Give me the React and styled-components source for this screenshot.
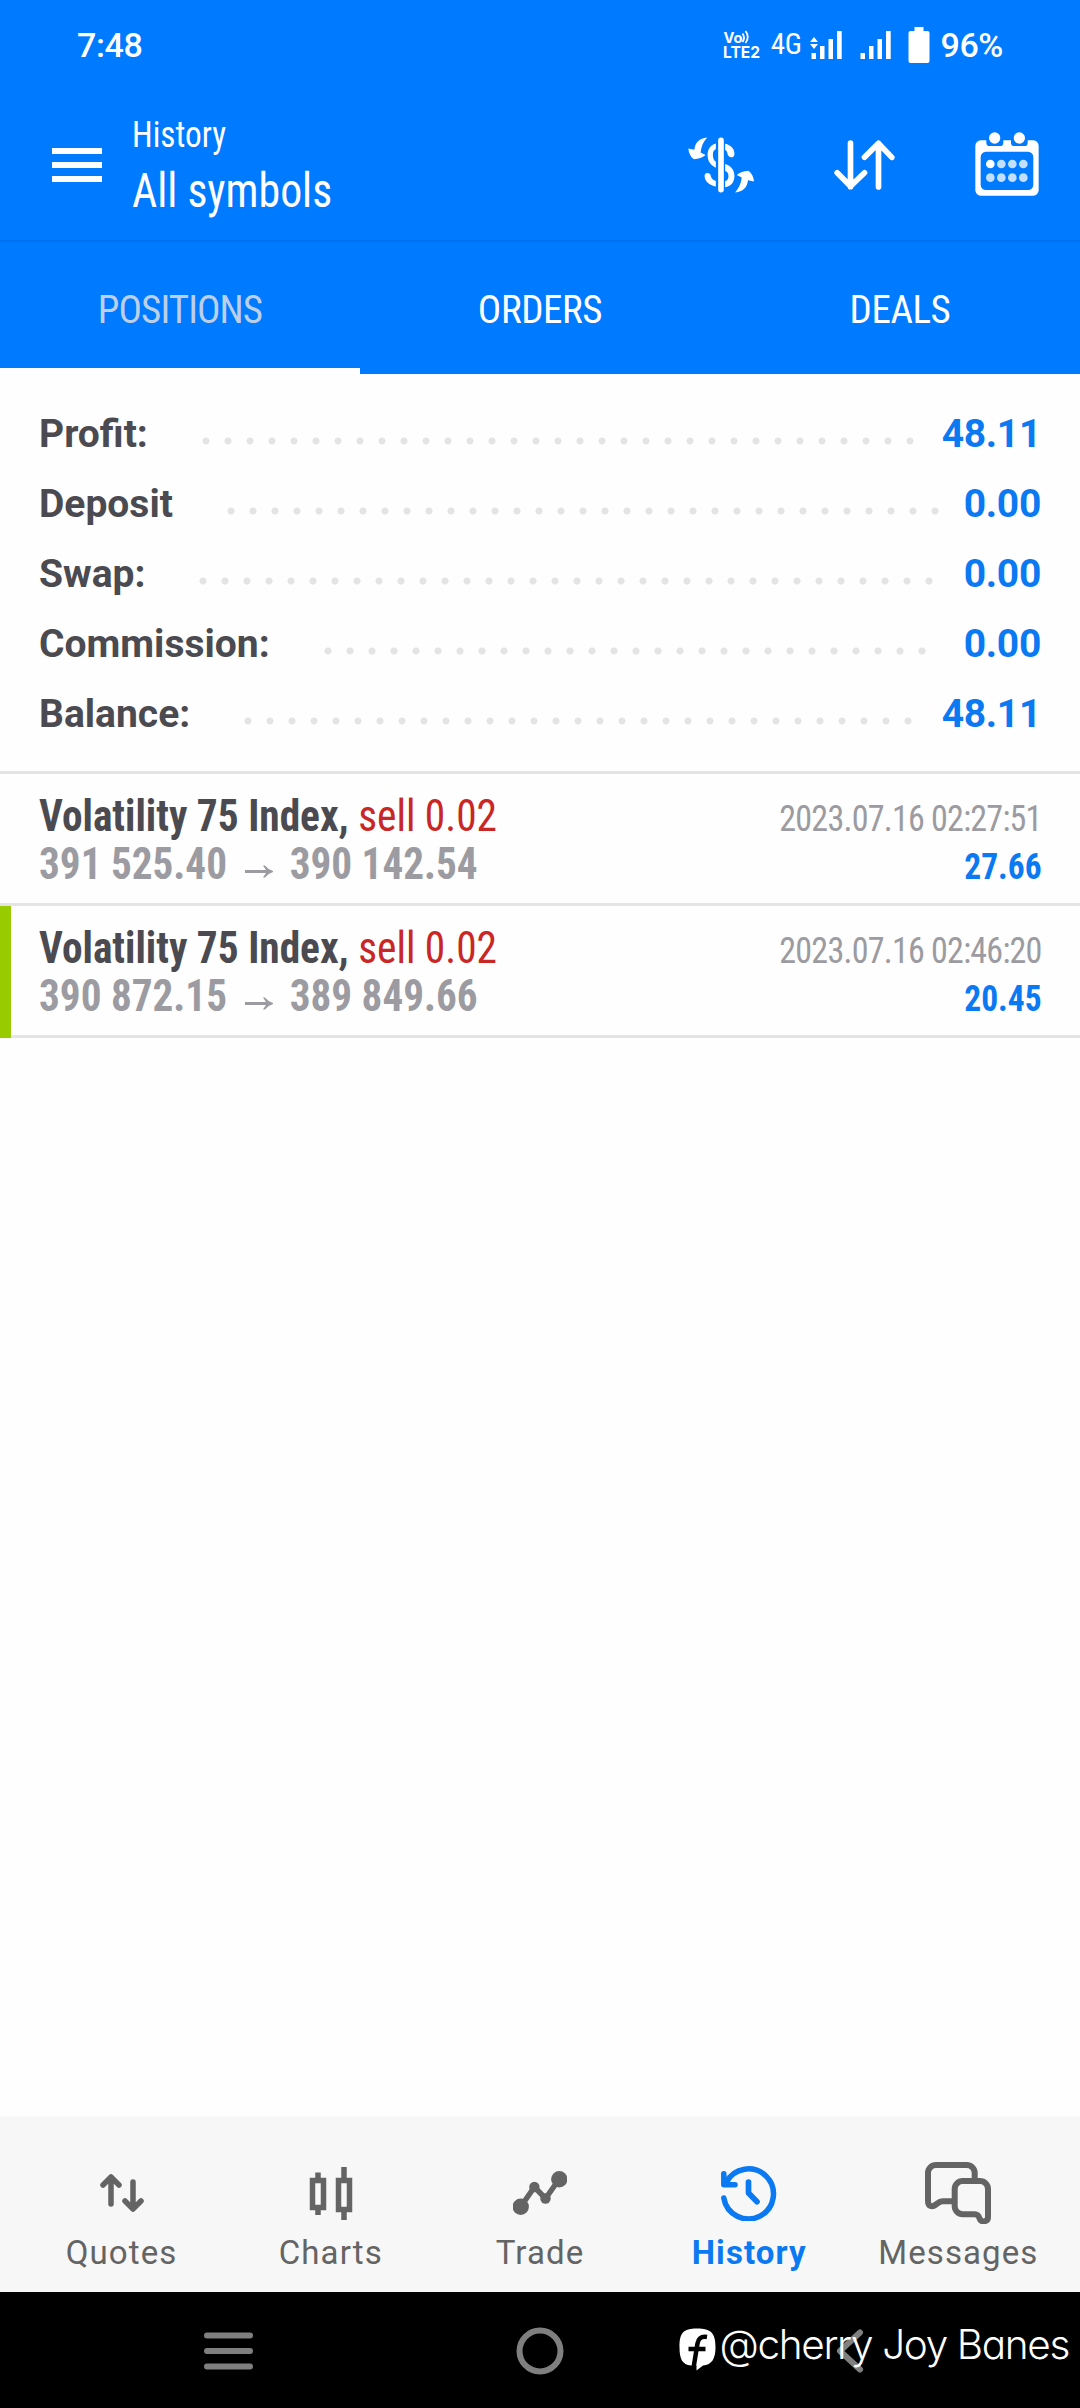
import styled, { createGlobalStyle } from 'styled-components';

const GlobalStyle = createGlobalStyle`
    * {
        box-sizing: border-box;
    }
    body {
        margin: 0;
        background: #fefefe;
        font-family: Roboto, "Liberation Sans", sans-serif;
    }
`

const Screen = styled.div`
    display: flex;
    flex-direction: column;
    width: 1080px;
    height: 2408px;
    overflow: hidden;
    background: #fefefe;
`
const Condensed = styled.span`
    font-family: "Roboto Condensed", Roboto, sans-serif;
    font-stretch: 75%;
    white-space: nowrap;
`

/* ---------- status bar ---------- */

const StatusBar = styled.div`
    display: flex;
    align-items: center;
    justify-content: space-between;
    height: 90px;
    padding: 0 77px;
    background: #007aff;
    color: #fff;
    font-size: 34px;
    font-weight: 500;
    letter-spacing: -0.4px;
`
const StatusIcons = styled.div`
    display: flex;
    align-items: center;
`
const Network = styled(Condensed)`
    font-size: 29px;
    font-weight: 400;
    margin: 0 8px 3px 10px;
`
const Signal = styled.svg`
    margin-right: ${props => props.$gap}px;
`
const Battery = styled.span`
    margin-left: 11px;
`

function VolteIcon() {
    return (
      <svg width="38" height="32" viewBox="0 0 38 32" fill="#fff" fontFamily="Inter, sans-serif" fontWeight="700" letterSpacing="0">
        <text x="0.5" y="13.500" fontSize="14" textLength="19" lengthAdjust="spacingAndGlyphs">Vo</text>
        <path d="M19.500 4.500q3 4 0 8.500M22.500 2q4.500 6 0 12" fill="none" stroke="#fff" strokeWidth="1.800" />
        <text x="0" y="29" fontSize="16" textLength="37" lengthAdjust="spacingAndGlyphs">LTE2</text>
      </svg>
    )
}

function SignalIcon({ arrows, gap }) {
    return (
      <Signal width="32" height="28" viewBox="0 0 32 28" fill="#fff" $gap={gap}>
        {arrows && <path d="M0 11l4-5 4 5zM0 13h8l-4 5z" />}
        <path d="M1.500 22h4.500v6h-4.500zM10 15h4.500v13h-4.500zM18.500 8h4.500v20h-4.500zM27 0h4.700v28h-4.700z" />
      </Signal>
    )
}

/* ---------- app bar ---------- */

const AppBar = styled.header`
    display: flex;
    align-items: center;
    height: 152px;
    padding: 0 41px 0 52px;
    background: #007aff;
    border-bottom: 2px solid #0071ec;
    color: #fff;
`
const Titles = styled.div`
    display: flex;
    flex: 1;
    flex-direction: column;
    padding: 5px 0 0 30px;
`
const Subtitle = styled(Condensed)`
    font-size: 36px;
    line-height: 46px;
    transform: scaleX(0.925);
    transform-origin: left;
`
const Title = styled(Condensed)`
    font-size: 48px;
    line-height: 66px;
    transform: scaleX(0.912);
    transform-origin: left;
`
const Actions = styled.div`
    display: flex;
    align-items: center;
    gap: 80px;
`
const Calendar = styled.svg`
    margin-bottom: 3px;
`

function MenuIcon() {
    return (
      <svg width="50" height="34" viewBox="0 0 50 34" fill="#fff">
        <path d="M0 0h50v6H0zM0 14h50v6H0zM0 28h50v6H0z" />
      </svg>
    )
}

function CurrencyIcon() {
    const arrow = 'M58 1C34 3 22 16 19 38L1 34C2 48 8 60 18 67C32 66 44 62 53 54L38 46C40 28 46 14 58 1Z'
    return (
      <svg width="66" height="56" viewBox="0 0 199 168" fill="#fff">
        <rect x="91" y="1" width="17" height="166" rx="8" />
        <path d="M84 19C66 24 59 38 59 54C59 74 70 86 84 92V74C77 70 75 62 75 54C75 44 78 39 84 36Z" />
        <path d="M112 20C130 24 140 36 140 50C140 58 136 61 131 61C124 61 121 56 119 50C118 44 116 41 112 39Z" />
        <path d="M112 81C130 86 140 100 140 117C140 136 129 149 112 151V133C119 131 122 126 122 117C122 109 119 104 112 101Z" />
        <path d="M84 149C64 145 50 132 50 117C50 111 54 107 60 108C66 109 68 112 69 118C71 126 76 130 84 132Z" />
        <path d={arrow} />
        <path d={arrow} transform="rotate(180 100 84)" />
      </svg>
    )
}

function SortIcon() {
    return (
      <svg width="61" height="50" viewBox="0 0 182 150" fill="none" stroke="#fff" strokeWidth="17" strokeLinecap="round" strokeLinejoin="round">
        <path d="M49 9V140M9 98L49 139L91 98" />
        <path d="M133 141V10M91 52L133 10L173 52" />
      </svg>
    )
}

function CalendarIcon() {
    return (
      <Calendar width="64" height="64" viewBox="0 0 192 192" fill="#fff">
        <rect x="1" y="25" width="190" height="166" rx="16" />
        <path d="M34 20H85V32Q85 42 75 42H44Q34 42 34 32ZM108 20H158V32Q158 42 148 42H118Q108 42 108 32Z" fill="#007aff" />
        <circle cx="59" cy="18" r="17" />
        <circle cx="133" cy="18" r="17" />
        <rect x="17" y="59" width="158" height="115" rx="16" fill="#007aff" />
        {[96, 137].map(y => [46, 79, 112, 145].map(x => (
            <circle key={x + '-' + y} cx={x} cy={y} r="13" opacity={x === 46 && y === 96 ? 1 : 0.76} />
        )))}
      </Calendar>
    )
}

/* ---------- tabs ---------- */

const Tabs = styled.nav`
    display: grid;
    grid-template-columns: repeat(3, 1fr);
    height: 132px;
    background: #007aff;
`
const Tab = styled(Condensed)`
    display: flex;
    align-items: center;
    justify-content: center;
    padding-top: 9px;
    border-bottom: 6px solid ${props => props.$active ? '#fff' : 'transparent'};
    color: ${props => props.$active ? '#bccfe6' : '#fff'};
    font-size: 39px;
    letter-spacing: ${props => props.$active ? -0.9 : -0.4}px;
`

/* ---------- account summary ---------- */

const Summary = styled.section`
    padding: 25px 39px 22px 39px;
    border-bottom: 3px solid #e4e4e4;
`
const SummaryRow = styled.div`
    display: flex;
    align-items: center;
    height: 70px;
    font-size: 39px;
    font-weight: 700;
`
const Label = styled.span`
    color: #4b4a50;
`
const Leader = styled.div`
    flex: 1;
    padding: 13px 13px 0 47px;
`
// keeps only whole dots, whatever the room left by the label
const Dots = styled.div`
    width: round(down, 100%, 22px);
    height: 8px;
    background: radial-gradient(circle, #e4e4e4 3.2px, transparent 3.9px) 0 0 / 22px 8px repeat-x;
`
const Amount = styled.span`
    color: #0a79f2;
    letter-spacing: -0.3px;
`

/* ---------- deals ---------- */

const Deal = styled.article`
    position: relative;
    display: grid;
    grid-template-columns: 1fr auto;
    align-items: baseline;
    height: 132px;
    padding: 18px 38px 0 39px;
    border-bottom: 3px solid #e4e4e4;
    line-height: 48px;
    grid-auto-rows: 48px;

    &::before {
        content: '';
        position: absolute;
        left: 0;
        top: 0;
        bottom: -3px;
        width: ${props => props.$marked ? 11 : 0}px;
        background: #99cc00;
    }
`
const Symbol = styled(Condensed)`
    color: #4b4a50;
    font-size: 44px;
    font-weight: 700;
    transform: scaleX(0.939);
    transform-origin: left;
`
const Side = styled.span`
    color: #c92626;
    font-weight: 400;
`
const Prices = styled(Condensed)`
    color: #9b9ba1;
    font-size: 44px;
    font-weight: 700;
    transform: scaleX(0.936);
    transform-origin: left;
`
const Time = styled(Condensed)`
    color: #9b9ba1;
    font-size: 36px;
    letter-spacing: -0.8px;
    text-align: right;
    transform: scaleX(0.945);
    transform-origin: right;
`
const Profit = styled(Condensed)`
    color: #0a79f2;
    font-size: 36px;
    font-weight: 700;
    text-align: right;
    transform: scaleX(0.93);
    transform-origin: right;
`
const Arrow = styled.svg`
    margin: 0 18px 0 19px;
`

/* ---------- bottom navigation ---------- */

const Spacer = styled.div`
    flex: 1;
`
const BottomNav = styled.nav`
    display: grid;
    grid-template-columns: repeat(5, 1fr);
    height: 175px;
    padding: 0 17px;
    background: #f7f7f7;
    box-shadow: 0 0 3px #f7f7f7;
`
const NavItem = styled.div`
    display: flex;
    flex-direction: column;
    align-items: center;
    padding-top: 43px;
    color: ${props => props.$active ? '#0a79f2' : '#646464'};
    font-size: 33px;
    font-weight: ${props => props.$active ? 700 : 400};
    letter-spacing: 1.1px;
    line-height: 44px;
`
const NavIcon = styled.div`
    display: flex;
    align-items: center;
    justify-content: center;
    height: 66px;
    margin-bottom: 5px;
`

function QuotesIcon() {
    return (
      <svg width="44" height="40" viewBox="0 0 44 40" fill="none" stroke="currentColor" strokeWidth="5.500" strokeLinecap="round" strokeLinejoin="round">
        <path d="M11 31V4M3 12l8-8 8 8M33 9v27M25 28l8 8 8-8" />
      </svg>
    )
}

function ChartsIcon() {
    return (
      <svg width="44" height="53" viewBox="0 0 44 53" fill="none" stroke="currentColor" strokeWidth="5.500">
        <path d="M3.500 13.500H14.500V40.500H3.500ZM9 5.500V13M9 41V48" />
        <path d="M29.500 13.500H40.500V42.500H29.500ZM35 0V13M35 43V53" />
      </svg>
    )
}

function TradeIcon() {
    return (
      <svg width="54" height="44" viewBox="0 0 54 44" fill="currentColor">
        <path d="M7.700 35.700L21.400 16L32.500 27.500L46.300 8" fill="none" stroke="currentColor" strokeWidth="5.500" />
        <circle cx="7.700" cy="35.700" r="8.200" />
        <circle cx="21.400" cy="16" r="5.200" />
        <circle cx="32.500" cy="27.500" r="5.200" />
        <circle cx="46.300" cy="8.200" r="8.200" />
      </svg>
    )
}

function HistoryIcon() {
    return (
      <svg width="56" height="56" viewBox="0 0 56 56" fill="none" stroke="currentColor" strokeWidth="5.500" strokeLinecap="round" strokeLinejoin="round">
        <path d="M2.800 33A25 25 0 1 0 5.200 17.500" />
        <path d="M2.800 8.800V19.800H14" />
        <path d="M2.800 19.800V12L11 19.800Z" fill="currentColor" stroke="none" />
        <path d="M27.500 17V28L36 36.700" strokeWidth="5.700" />
      </svg>
    )
}

function MessagesIcon() {
    return (
      <svg width="66" height="62" viewBox="0 0 66 62" fill="none" stroke="currentColor" strokeWidth="6" strokeLinejoin="round">
        <path d="M49.700 17V11a8 8 0 0 0-8-8H11a8 8 0 0 0-8 8V39C3 44.500 7 45.500 11 42.500C13.500 40.500 14.500 39.200 17.500 39.200H28" />
        <path d="M37.700 19H55a8 8 0 0 1 8 8V55C63 60 57 60.500 55 57.500C54 55 53.500 52.300 50 52.300H37.700a8 8 0 0 1-8-8V27a8 8 0 0 1 8-8Z" />
      </svg>
    )
}

/* ---------- system bar ---------- */

const SystemBar = styled.footer`
    position: relative;
    display: grid;
    grid-template-columns: 456px 168px 452px;
    align-items: center;
    justify-items: center;
    height: 116px;
    padding-top: 2px;
    background: #000;
`
const Watermark = styled.div`
    position: absolute;
    right: 11px;
    top: 30px;
    display: flex;
    align-items: flex-start;
    gap: 4px;
    color: #fff;
    font-family: Inter, sans-serif;
    font-size: 40.5px;
    font-weight: 300;
    font-feature-settings: "cv11";
    letter-spacing: -1.35px;
    line-height: 46px;
    white-space: nowrap;
`
const Logo = styled.svg`
    margin-top: 6px;
`

const summary = [
    { label: 'Profit:', value: '48.11' },
    { label: 'Deposit', value: '0.00' },
    { label: 'Swap:', value: '0.00' },
    { label: 'Commission:', value: '0.00' },
    { label: 'Balance:', value: '48.11' },
]

const deals = [
    { open: '391 525.40', close: '390 142.54', time: '2023.07.16 02:27:51', profit: '27.66' },
    { open: '390 872.15', close: '389 849.66', time: '2023.07.16 02:46:20', profit: '20.45', marked: true },
]

const navItems = [
    { label: 'Quotes', Icon: QuotesIcon },
    { label: 'Charts', Icon: ChartsIcon },
    { label: 'Trade', Icon: TradeIcon },
    { label: 'History', Icon: HistoryIcon, active: true },
    { label: 'Messages', Icon: MessagesIcon },
]

export default function App() {
    return (
      <Screen>
        <GlobalStyle />
        <StatusBar>
          <span>7:48</span>
          <StatusIcons>
            <VolteIcon />
            <Network>4G</Network>
            <SignalIcon arrows gap={17} />
            <SignalIcon gap={17} />
            <svg width="22" height="36" viewBox="0 0 22 36" fill="#fff">
              <path d="M6.500 0h9v4h4q2 0 2 2v28q0 2-2 2h-17q-2 0-2-2v-28q0-2 2-2h4z" />
            </svg>
            <Battery>96%</Battery>
          </StatusIcons>
        </StatusBar>
        <AppBar>
          <MenuIcon />
          <Titles>
            <Subtitle>History</Subtitle>
            <Title>All symbols</Title>
          </Titles>
          <Actions>
            <CurrencyIcon />
            <SortIcon />
            <CalendarIcon />
          </Actions>
        </AppBar>
        <Tabs>
          <Tab $active>POSITIONS</Tab>
          <Tab>ORDERS</Tab>
          <Tab>DEALS</Tab>
        </Tabs>
        <Summary>
          {summary.map(row => (
              <SummaryRow key={row.label}>
                <Label>{row.label}</Label>
                <Leader><Dots /></Leader>
                <Amount>{row.value}</Amount>
              </SummaryRow>
          ))}
        </Summary>
        {deals.map(deal => (
            <Deal key={deal.time} $marked={deal.marked}>
              <Symbol>Volatility 75 Index, <Side>sell 0.02</Side></Symbol>
              <Time>{deal.time}</Time>
              <Prices>
                {deal.open}
                <Arrow width="30" height="14" viewBox="0 0 28 14" preserveAspectRatio="none" fill="#9b9ba1">
                  <path d="M0 5h21l-3-4.500h2q3 4 8 5.500v1q-5 1.500-8 5.500h-2l3-4.500h-21z" />
                </Arrow>
                {deal.close}
              </Prices>
              <Profit>{deal.profit}</Profit>
            </Deal>
        ))}
        <Spacer />
        <BottomNav>
          {navItems.map(({ label, Icon, active }) => (
              <NavItem key={label} $active={active}>
                <NavIcon><Icon /></NavIcon>
                {label}
              </NavItem>
          ))}
        </BottomNav>
        <SystemBar>
          <svg width="49" height="38" viewBox="0 0 49 38" stroke="#7f7f7f" strokeWidth="6" strokeLinecap="round">
            <path d="M3 3.500H46M3 19H46M3 34.500H46" />
          </svg>
          <svg width="48" height="48" viewBox="0 0 48 48" fill="none" stroke="#7f7f7f" strokeWidth="6">
            <circle cx="24" cy="24" r="20.500" />
          </svg>
          <svg width="28" height="44" viewBox="0 0 28 44" fill="none" stroke="#7f7f7f" strokeWidth="6" strokeLinecap="round" strokeLinejoin="round">
            <path d="M24 3.500L4 22L24 40.500" />
          </svg>
          <Watermark>
            <Logo width="37" height="43" viewBox="0 0 37 43">
              <path d="M18 0.500C32 0.500 36.500 5 36.500 19C36.500 31 33 36.500 24 37.500L17.500 42.500V37.500H12C3 36.500 0.500 31 0.500 19C0.500 5 4 0.500 18 0.500Z" fill="#fff" />
              <path d="M28 9C22 8 19.500 10.500 18.500 15.500L14.500 40M9.500 21H26.500" fill="none" stroke="#000" strokeWidth="4.500" />
            </Logo>
            @cherry Joy Banes
          </Watermark>
        </SystemBar>
      </Screen>
    )
}
